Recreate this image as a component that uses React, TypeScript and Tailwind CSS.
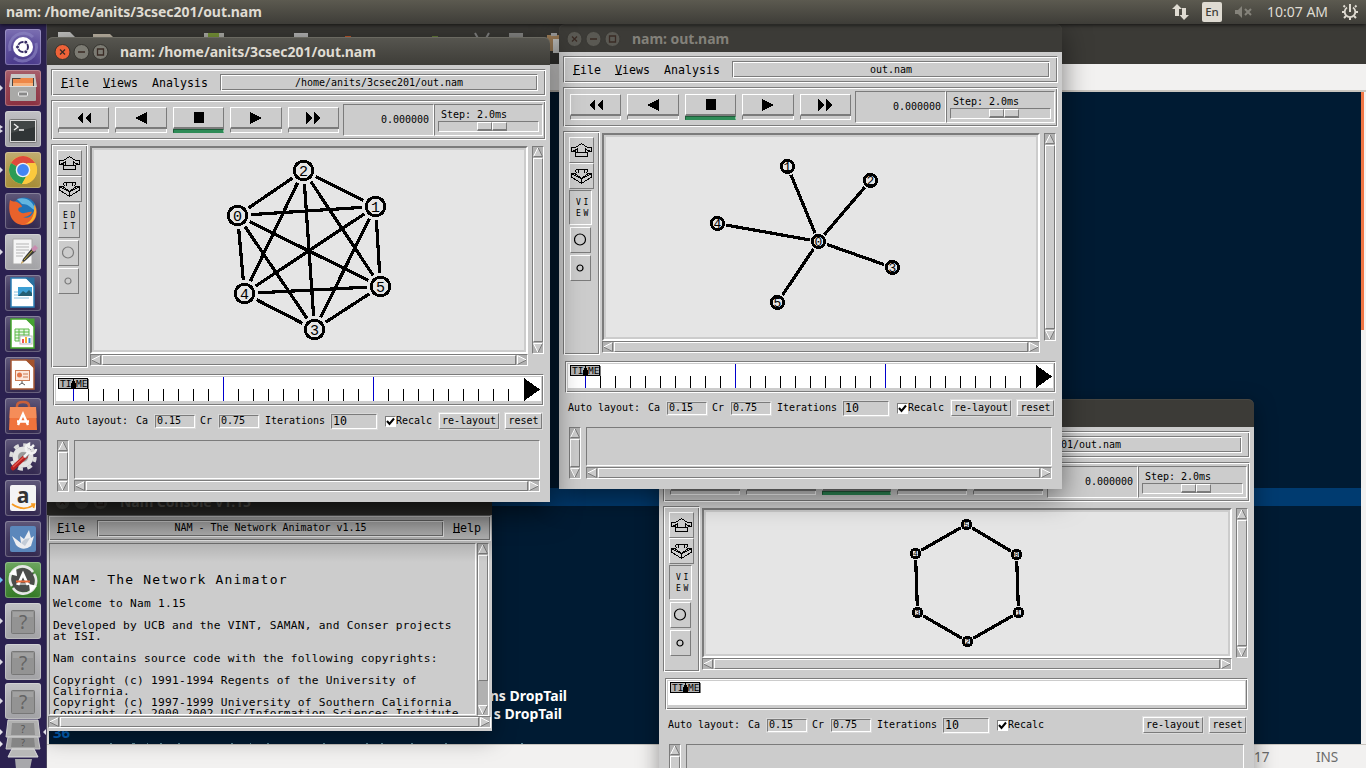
import React from "react";

const GROOVE =
  "border border-t-[#7b7b7b] border-l-[#7b7b7b] border-b-white border-r-white shadow-[inset_1px_1px_0_#fff,inset_-1px_-1px_0_#7b7b7b]";
const SUNKEN = "border border-t-[#7b7b7b] border-l-[#7b7b7b] border-b-white border-r-white";
const RAISED = "border border-t-white border-l-white border-b-[#7b7b7b] border-r-[#7b7b7b]";
const MONO6 = "font-['DejaVu_Sans_Mono',monospace] text-[10px] leading-[12px] tracking-[-0.02px] whitespace-pre";
const MONO7 = "font-['DejaVu_Sans_Mono',monospace] text-[11.6px] leading-[14px] tracking-[0.02px] whitespace-pre";
const UI = "font-['Noto_Sans','Open_Sans',sans-serif] whitespace-pre";

type Pt = [number, number];

function Arrow({ dir }: { dir: "up" | "down" | "left" | "right" }) {
  return (
    <svg width="10" height="10" viewBox="0 0 10 10" className="block shrink-0" fill="none">
      {dir === "up" && (
        <>
          <path d="M5 .5L9.5 9.5H.5Z" fill="#ccc" />
          <path d="M.5 9.5L5 .5" stroke="#fff" />
          <path d="M5 .5L9.5 9.5H.5" stroke="#7b7b7b" />
        </>
      )}
      {dir === "down" && (
        <>
          <path d="M.5.5H9.5L5 9.5Z" fill="#ccc" />
          <path d="M9.5.5H.5L5 9.5" stroke="#fff" />
          <path d="M5 9.5L9.5.5" stroke="#7b7b7b" />
        </>
      )}
      {dir === "left" && (
        <>
          <path d="M.5 5L9.5.5V9.5Z" fill="#ccc" />
          <path d="M.5 5L9.5.5" stroke="#fff" />
          <path d="M9.5.5V9.5L.5 5" stroke="#7b7b7b" />
        </>
      )}
      {dir === "right" && (
        <>
          <path d="M.5.5L9.5 5L.5 9.5Z" fill="#ccc" />
          <path d="M.5 9.5V.5L9.5 5" stroke="#fff" />
          <path d="M9.5 5L.5 9.5" stroke="#7b7b7b" />
        </>
      )}
    </svg>
  );
}

function VScroll({ tail = false }: { tail?: boolean }) {
  return (
    <div className={`flex w-3 shrink-0 flex-col gap-px bg-[#b1b1b1] ${SUNKEN}`}>
      <Arrow dir="up" />
      <div className={`min-h-0 flex-1 bg-[#ccc] ${RAISED}`} />
      {tail && <div className="h-[22px] shrink-0" />}
      <Arrow dir="down" />
    </div>
  );
}

function HScroll() {
  return (
    <div className={`flex h-3 shrink-0 gap-px bg-[#b1b1b1] ${SUNKEN}`}>
      <Arrow dir="left" />
      <div className={`min-w-0 flex-1 bg-[#ccc] ${RAISED}`} />
      <Arrow dir="right" />
    </div>
  );
}

function Menu({ children }: { children: string }) {
  return (
    <span className={`block ${MONO7}`}>
      <span className="underline decoration-1 underline-offset-[0px]">{children[0]}</span>
      {children.slice(1)}
    </span>
  );
}

function PlayButton({ icon, on = false }: { icon: string; on?: boolean }) {
  return (
    <div className="h-[26px] min-w-0 flex-1">
      <div className="flex h-[22px] justify-center border border-b-2 border-t-white border-l-white border-b-[#7b7b7b] border-r-[#7b7b7b] pt-1">
        <svg width="16" height="12" viewBox="0 0 16 12" className="block" shapeRendering="crispEdges">
          <path d={icon} />
        </svg>
      </div>
      <div
        className={
          on
            ? "h-1 border border-t-[#1f5c3a] border-l-[#1f5c3a] border-b-[#2e8b57] border-r-[#8fc4a4] bg-[#2e8b57]"
            : "h-1 border border-t-0 border-l-[#7b7b7b] border-b-white border-r-white bg-[#ccc]"
        }
      />
    </div>
  );
}

const PLAY_ICONS = [
  "M7 0V12L1 6ZM15 0V12L9 6Z",
  "M14 0V12L2 6Z",
  "M3 0H13V11H3Z",
  "M2 0L14 6L2 12Z",
  "M1 0L7 6L1 12ZM9 0L15 6L9 12Z",
];

function Toolbox({ edit }: { edit: boolean }) {
  const ink = edit ? "#7b7b7b" : "#000";
  return (
    <div className={`flex w-[37px] shrink-0 flex-col pt-[5px] pl-[5px] ${GROOVE}`}>
      <div className={`flex h-[26px] w-[25px] items-center justify-center ${RAISED}`}>
        <svg width="22" height="14" viewBox="0 0 22 14" fill="none" stroke="#000" shapeRendering="crispEdges">
          <path d="M10.5.5L4.500 4.500H.5V8.500H4.500M10.500.5L16.500 4.500H20.500V8.500H16.500M.5 8.500L6 6.500M20.500 8.500L15 6.500M6.500 5V9M14.500 5V9M4.500 9.500H16.500V13.500H4.500Z" />
        </svg>
      </div>
      <div className={`flex h-[26px] w-[25px] items-center justify-center ${RAISED}`}>
        <svg width="22" height="15" viewBox="0 0 22 15" fill="none" stroke="#000" shapeRendering="crispEdges">
          <path d="M4.500.5H16.500V2.500L14.500 4.500M4.500.5V2.500L6.500 4.500M.5 4.500H4L10.500 9.500L17 4.500H20.500V8L10.500 14.500L.5 8V4.500M.5 4.500L10.500 10L20.500 4.500M10.500 10V14M7 1L8 3L6.500 4.500M14 1L13 3L14.500 4.500" />
        </svg>
      </div>
      <div
        className={`mt-px flex h-[35px] flex-col items-center justify-center font-['DejaVu_Sans_Mono',monospace] text-[8px] leading-[11px] tracking-[2.6px] ${
          edit ? `ml-[1px] w-[22px] pl-[3px] ${RAISED}` : `w-[23px] pl-[6px] ${SUNKEN}`
        }`}
      >
        <span>{edit ? "ED" : "VI"}</span>
        <span>{edit ? "IT" : "EW"}</span>
      </div>
      <div className={`mt-[2px] ml-[1px] flex h-[26px] w-[21px] items-center justify-center pb-[2px] ${RAISED}`}>
        <svg width="13" height="13" viewBox="0 0 13 13" fill="none" stroke={ink}>
          <circle cx="6" cy="6.500" r="5.500" strokeWidth="1.200" />
        </svg>
      </div>
      <div className={`mt-[2px] ml-[1px] flex h-[26px] w-[21px] items-center justify-center pr-px ${RAISED}`}>
        <svg width="8" height="8" viewBox="0 0 8 8" fill="none" stroke={ink}>
          <circle cx="4" cy="4" r="3" strokeWidth="1.200" />
        </svg>
      </div>
    </div>
  );
}

function Network({
  box,
  nodes,
  edges,
  r,
  gap,
  font,
}: {
  box: [number, number, number, number];
  nodes: Pt[];
  edges: Pt[];
  r: number;
  gap: number;
  font: number;
}) {
  return (
    <svg width={box[2]} height={box[3]} viewBox={box.join(" ")} className="block bg-[#e5e5e5]">
      {edges.map(([a, b]) => {
        const [x1, y1] = nodes[a];
        const [x2, y2] = nodes[b];
        const len = Math.hypot(x2 - x1, y2 - y1);
        const dx = ((x2 - x1) / len) * gap;
        const dy = ((y2 - y1) / len) * gap;
        return (
          <line
            key={`${a}-${b}`}
            x1={x1 + dx}
            y1={y1 + dy}
            x2={x2 - dx}
            y2={y2 - dy}
            stroke="#000"
            strokeWidth="3.2"
            shapeRendering="crispEdges"
          />
        );
      })}
      {nodes.map(([x, y], i) => (
        <g key={i}>
          <circle cx={x} cy={y} r={r} fill="none" stroke="#000" strokeWidth="3" shapeRendering="crispEdges" />
          <text
            x={x}
            y={y + font * 0.34}
            fontSize={font}
            textAnchor="middle"
            fontFamily="Liberation Mono, DejaVu Sans Mono, monospace"
          >
            {i}
          </text>
        </g>
      ))}
    </svg>
  );
}

function Timeline({ ticks }: { ticks: boolean }) {
  return (
    <div className={`mx-[2px] mt-1.5 h-8 shrink-0 p-[2px] ${GROOVE}`}>
      <svg width="100%" height="24" className="block bg-white" shapeRendering="crispEdges">
        {ticks &&
          Array.from({ length: 30 }, (_, i) => (
            <rect
              key={i}
              x={16 + i * 15}
              y={i === 10 || i === 20 ? 0 : 12}
              width="1"
              height={i === 10 || i === 20 ? 24 : 12}
              transform="translate(1 0)"
              fill={i % 10 === 0 ? "#0000cd" : "#000"}
            />
          ))}
        {ticks && <path d="M468 1L484 12.500L468 24Z" />}
        <g transform="translate(1 1)">
          <rect x="1.500" y=".5" width="29" height="10" fill="#b1b1b1" stroke="#000" />
          <rect x="31" y="1" width="1" height="10" fill="#7b7b7b" />
          <text x="3" y="9" fontSize="9.500" fontFamily="DejaVu Sans Mono, monospace">
            TI
          </text>
          <text x="19" y="9" fontSize="9.500" fontFamily="DejaVu Sans Mono, monospace">
            ME
          </text>
          <path d="M16 0H17V3H18V5H19V10H14V5H15V3H16Z" />
        </g>
      </svg>
    </div>
  );
}

function Field({ value, big = false }: { value: string; big?: boolean }) {
  return (
    <span
      className={`flex items-center pl-[1px] shadow-[0_0_0_1px_#d9d9d9] ${SUNKEN} ${
        big ? `h-[15px] w-[46px] ${MONO7}` : `h-[13px] w-10 ${MONO6}`
      }`}
    >
      {value}
    </span>
  );
}

function Titlebar({ title, active }: { title: string; active: boolean }) {
  const ring = active ? "#35342f" : "#3a3935";
  return (
    <div
      className={`flex h-7 shrink-0 items-center rounded-t-[6px] pl-[7px] ${
        active
          ? "bg-linear-to-b from-[#575650] to-[#3e3d38] shadow-[inset_0_1px_0_#6a6961]"
          : "bg-[#3c3b37] shadow-[inset_0_1px_0_#474641]"
      }`}
    >
      <svg width="56" height="18" viewBox="0 0 56 18" className="mt-px block shrink-0" fill="none">
        <circle cx="8.500" cy="9" r="7.500" fill={active ? "#ee6238" : "#5a5953"} stroke={ring} />
        <circle cx="27.500" cy="9" r="7.500" fill={active ? "#7c7b73" : "#5a5953"} stroke={ring} />
        <circle cx="46.500" cy="9" r="7.500" fill={active ? "#7c7b73" : "#5a5953"} stroke={ring} />
        <path d="M6 6.500L11 11.500M11 6.500L6 11.500M24 9H31M43.500 6H49.500V12H43.500Z" stroke="#3a2b25" strokeWidth="1.300" />
      </svg>
      <span
        className={`mt-[2px] pl-[10px] text-[14px] leading-7 font-bold tracking-[-0.05px] ${UI} ${
          active ? "text-[#dfdbd2]" : "text-[#83817a]"
        }`}
      >
        {title}
      </span>
    </div>
  );
}

interface NamProps {
  frame: string;
  title: string;
  file: string;
  active?: boolean;
  edit?: boolean;
  ticks?: boolean;
  midHeight: string;
  children: React.ReactNode;
}

function NamWindow({ frame, title, file, active = false, edit = false, ticks = true, midHeight, children }: NamProps) {
  return (
    <section className={`absolute flex flex-col rounded-t-[6px] text-black ${frame}`}>
      <Titlebar title={title} active={active} />
      <div className="flex min-h-0 flex-1 flex-col bg-[#ccc] px-1 pt-1 pb-2.5">
        <div className={`flex h-[27px] shrink-0 items-center pr-[7px] pl-[9px] ${GROOVE}`}>
          <div className="flex w-[159px] shrink-0 gap-[14px]">
            <Menu>File</Menu>
            <Menu>Views</Menu>
            <Menu>Analysis</Menu>
          </div>
          <div className={`flex h-[17px] flex-1 items-center justify-center ${GROOVE} ${MONO6}`}>{file}</div>
        </div>

        <div className={`mt-1 flex h-10 shrink-0 pt-[3px] pr-[2px] pl-1.5 ${GROOVE}`}>
          <div className="mt-[3px] flex flex-1 gap-1.5">
            {PLAY_ICONS.map((d, i) => (
              <PlayButton key={i} icon={d} on={i === 2} />
            ))}
          </div>
          <div className={`ml-1 flex h-8 w-[91px] items-center justify-end pr-1 ${SUNKEN} ${MONO6}`}>0.000000</div>
          <div className={`h-8 w-[109px] px-[3px] pt-[4px] ${SUNKEN}`}>
            <div className={`pl-[3px] ${MONO6}`}>Step: 2.0ms</div>
            <div className={`h-[11px] w-[101px] pl-[38px] ${SUNKEN}`}>
              <div className="flex h-[9px] w-[30px]">
                <div className="w-[15px] border border-b-2 border-t-white border-l-white border-b-[#7b7b7b] border-r-[#7b7b7b]" />
                <div className="w-[15px] border border-b-2 border-t-white border-l-white border-b-[#7b7b7b] border-r-[#7b7b7b]" />
              </div>
            </div>
          </div>
        </div>

        <div className={`mt-1 flex shrink-0 ${midHeight}`}>
          <Toolbox edit={edit} />
          <div className="mt-[2px] mb-[2px] ml-[2px] flex flex-1 flex-col">
            <div className="min-h-0 flex-1 border-2 border-t-[#7b7b7b] border-l-[#7b7b7b] border-b-white border-r-white p-[2px]">
              {children}
            </div>
            <HScroll />
          </div>
          <div className="mt-[2px] mr-[2px] mb-[14px] ml-1 flex">
            <VScroll />
          </div>
        </div>

        <Timeline ticks={ticks} />

        <div className={`flex h-[34px] shrink-0 items-center pb-1 pl-[5px] ${MONO6}`}>
          <span className="w-[80px]">Auto layout:</span>
          <span className="w-[19px]">Ca</span>
          <Field value="0.15" />
          <span className="w-6 pl-[5px]">Cr</span>
          <Field value="0.75" />
          <span className="w-[72px] pl-[6px]">Iterations</span>
          <Field value="10" big />
          <span className="ml-2 flex h-[11px] w-[11px] items-center justify-center border border-t-[#7b7b7b] border-l-[#7b7b7b] border-white bg-white">
            <svg width="9" height="9" viewBox="0 0 9 9" fill="none">
              <path d="M1 4L3.500 7L8 1.500" stroke="#000" strokeWidth="2" />
            </svg>
          </span>
          <span>Recalc</span>
          <span className="flex-1" />
          <span className={`flex h-4 w-[60px] items-center justify-center shadow-[0_0_0_1px_#dcdcdc] ${RAISED}`}>
            re-layout
          </span>
          <span className={`mr-1 ml-1.5 flex h-4 w-[37px] items-center justify-center shadow-[0_0_0_1px_#dcdcdc] ${RAISED}`}>
            reset
          </span>
        </div>

        <div className="flex min-h-0 flex-1 pr-1.5 pl-1.5">
          <VScroll />
          <div className="ml-[5px] flex flex-1 flex-col">
            <div className={`mb-px min-h-0 flex-1 ${SUNKEN}`} />
            <HScroll />
          </div>
        </div>
      </div>
    </section>
  );
}

function Console() {
  return (
    <section className="absolute top-[487px] left-[47px] z-10 flex h-[244px] w-[445px] flex-col shadow-[0_6px_22px_rgba(0,0,0,0.4)]">
      <Titlebar title="Nam Console v1.15" active={false} />
      <div className="flex min-h-0 flex-1 flex-col bg-[#ccc] px-px pb-[2px]">
        <div className={`flex h-[26px] shrink-0 items-center pr-[9px] pl-2 ${GROOVE}`}>
          <span className="w-[40px]">
            <Menu>File</Menu>
          </span>
          <div className={`flex h-[17px] flex-1 items-center justify-center ${GROOVE} ${MONO6}`}>
            NAM - The Network Animator v1.15
          </div>
          <span className="pl-[9px]">
            <Menu>Help</Menu>
          </span>
        </div>
        <div className="mt-[2px] flex h-[173px] shrink-0 px-px">
          <div
            className={`h-[172px] w-[427px] overflow-hidden pt-[28px] pl-[3px] font-['DejaVu_Sans_Mono',monospace] text-[11.2px] leading-[11px] tracking-[0.258px] whitespace-pre ${SUNKEN}`}
          >
            <div className="text-[13px] leading-[16px] tracking-[1.2px]">NAM - The Network Animator</div>
            <div className="pt-[10px]">Welcome to Nam 1.15</div>
            <div className="pt-[11px]">{"Developed by UCB and the VINT, SAMAN, and Conser projects\nat ISI."}</div>
            <div className="pt-[11px]">Nam contains source code with the following copyrights:</div>
            <div className="pt-[11px]">
              {
                "Copyright (c) 1991-1994 Regents of the University of\nCalifornia.\nCopyright (c) 1997-1999 University of Southern California\nCopyright (c) 2000-2002 USC/Information Sciences Institute"
              }
            </div>
          </div>
          <div className="ml-px flex">
            <VScroll tail />
          </div>
        </div>
        <HScroll />
      </div>
      <div className="absolute top-[15px] left-0 h-[60px] w-full bg-linear-to-b from-black/40 to-black/0" />
    </section>
  );
}

/* ---------- launcher ---------- */

function Tile({
  tone,
  marks = 0,
  blue = false,
  children,
}: {
  tone: string;
  marks?: number;
  blue?: boolean;
  children: React.ReactNode;
}) {
  return (
    <div className="flex h-[41px] w-[47px] shrink-0 items-center last-of-type:-mt-[2px]">
      <svg width="5" height="12" viewBox="0 0 5 12" fill={blue ? "#6fc3f0" : "#dcdae4"}>
        {marks === 1 && <path d="M0 3L3 6L0 9Z" />}
        {marks === 2 && <path d="M0 2L3 4L0 6ZM0 6L3 8L0 10Z" />}
      </svg>
      <div
        className={`h-9 w-9 rounded-[3px] bg-linear-to-b shadow-[inset_0_0_0_1px_rgba(255,255,255,0.25),inset_0_8px_10px_rgba(255,255,255,0.12)] ${tone}`}
      >
        <svg width="36" height="36" viewBox="0 0 36 36" fill="none" className="block">
          {children}
        </svg>
      </div>
    </div>
  );
}

const DARK = "from-[#4a4268] to-[#33294f]";
const LIGHT = "from-[#b9b9bd] to-[#a2a2a5]";

function Doc({ color, dark, children }: { color: string; dark: string; children: React.ReactNode }) {
  return (
    <>
      <path d="M6 3H22L29 10V32H6Z" fill="#fff" stroke={color} strokeWidth="1.500" />
      <path d="M20 2.500H29.500V12Z" fill={dark} />
      {children}
    </>
  );
}

function Unknown() {
  return (
    <>
      <rect x="6.500" y="7.500" width="23" height="23" rx="1" fill="#939393" stroke="#777" />
      <rect x="8" y="9" width="20" height="5" fill="#aaa" opacity=".6" />
      <text x="18" y="26" fontSize="19" textAnchor="middle" fill="#646464" fontFamily="Noto Sans, sans-serif">
        ?
      </text>
    </>
  );
}

function Launcher() {
  return (
    <nav className="relative z-40 flex w-[47px] shrink-0 flex-col overflow-hidden border-r border-[#4c4660] bg-[#2b2150] pt-[2px]">
      <Tile tone="from-[#6a5ca8] to-[#4b3b8c]">
        <path d="M5 22A14 14 0 0 1 28 8M31 14A14 14 0 0 1 9 29" stroke="#9088c4" strokeWidth="3" opacity=".6" />
        <circle cx="18" cy="18" r="10" fill="#fff" />
        <circle cx="18" cy="18" r="5" stroke="#372d66" strokeWidth="2" />
        <circle cx="12.500" cy="18" r="2" fill="#372d66" stroke="#fff" />
        <circle cx="20.800" cy="13.200" r="2" fill="#372d66" stroke="#fff" />
        <circle cx="20.800" cy="22.800" r="2" fill="#372d66" stroke="#fff" />
      </Tile>
      <Tile tone="from-[#9c4a58] to-[#8a3141]" marks={1}>
        <path d="M6 4H30L32 17H4Z" fill="#c9c9c7" />
        <path d="M7 8H29V17H7Z" fill="#4a443f" />
        <path d="M8 9H15L16 8H28V17H8Z" fill="#ee8748" />
        <path d="M8 13H28V17H8Z" fill="#f7b27d" />
        <rect x="5" y="16" width="26" height="15" rx="1" fill="#a9a9a7" />
        <path d="M5 16.500H31" stroke="#ddd" />
        <rect x="13.500" y="22" width="9" height="4" rx="1" fill="#888" stroke="#eee" />
      </Tile>
      <Tile tone={LIGHT} marks={2}>
        <rect x="4.500" y="8.500" width="27" height="23" rx="1" fill="#ddd" stroke="#777" />
        <rect x="6" y="10" width="24" height="20" fill="#303536" />
        <path d="M6 10H30V16L6 22Z" fill="#4c5152" opacity=".6" />
        <path d="M9 13L13 16L9 19M14 19H19" stroke="#eee" strokeWidth="1.400" />
      </Tile>
      <Tile tone="from-[#b9a25e] to-[#a68d36]" marks={1}>
        <circle cx="18" cy="18" r="14" fill="#fbc93d" />
        <path d="M18 18L5.900 11A14 14 0 0 1 30.100 11Z" fill="#de4a3c" />
        <path d="M5.900 11A14 14 0 0 0 17 32L23 21L18 18Z" fill="#2a9c56" />
        <path d="M30.100 11A14 14 0 0 1 17 32L24 20L22 11Z" fill="#fbc93d" />
        <circle cx="18" cy="18" r="6.600" fill="#4285f4" stroke="#f1f1f1" strokeWidth="1.400" />
      </Tile>
      <Tile tone={DARK}>
        <circle cx="19" cy="17" r="12.500" fill="#2174b8" />
        <path d="M12 6C20 3 29 8 30 17C26 16 25 11 17 11Z" fill="#62b5e0" />
        <path d="M5 7C7 9 10 8 12 9C14 10 17 12 17 14C13 14 12 17 15 19C19 22 23 18 27 19C25 23 21 24 18 24C25 27 30 20 30 12C34 20 31 32 19 32C8 32 2 22 5 7Z" fill="#e9622b" />
        <path d="M29 11C34 20 30 31 20 31C28 28 30 20 29 11Z" fill="#f8b332" />
      </Tile>
      <Tile tone={LIGHT} marks={1}>
        <path d="M8 5H27V30H8Z" fill="#f6f6f6" stroke="#aaa" />
        <path d="M11 10H24M11 13H24M11 16H24M11 19H20M11 22H18" stroke="#b5b5b5" />
        <path d="M16 30L18 25L27 14L31 17L20 27Z" fill="#3b3b3b" />
        <path d="M19 26L28 16" stroke="#c9b43a" />
        <path d="M26 15L30 11L33 14L29 18Z" fill="#c98bb0" />
        <path d="M16 30L17 27L19 28Z" fill="#e8c070" />
      </Tile>
      <Tile tone={DARK}>
        <Doc color="#2a7eb5" dark="#2a6f9f">
          <rect x="13" y="12" width="14" height="9" fill="#3c9fd4" />
          <path d="M13 21L18 16L21 18L24 15L27 18V21Z" fill="#235f73" />
          <path d="M9 17H13M9 20H13M9 23H24" stroke="#8ac0dd" />
        </Doc>
      </Tile>
      <Tile tone={DARK}>
        <Doc color="#43a82a" dark="#45a332">
          <path d="M10 13H24V25H10ZM10 16H24M10 19H24M10 22H24M14 13V25M19 13V25" stroke="#5ab947" fill="#e8f8e4" />
          <rect x="15" y="20" width="12" height="8" fill="#fff" stroke="#bbb" />
          <path d="M18 27V23" stroke="#e55" strokeWidth="2" />
          <path d="M21 27V21" stroke="#f5b030" strokeWidth="2" />
          <path d="M24.500 27V22" stroke="#3b8ed0" strokeWidth="2" />
        </Doc>
      </Tile>
      <Tile tone={DARK}>
        <Doc color="#a85a34" dark="#a4532c">
          <rect x="10.500" y="13.500" width="14" height="10" fill="#fbe6da" stroke="#cc7a52" />
          <circle cx="14.500" cy="18" r="2.500" fill="#e0764a" />
          <path d="M18 17H23M18 20H23" stroke="#cc7a52" />
          <path d="M17 24V26L14 28M17 26L20 28" stroke="#555" />
        </Doc>
      </Tile>
      <Tile tone={DARK}>
        <path d="M12 12V8Q12 4 18 4T24 8V12" stroke="#c9603a" strokeWidth="2.500" />
        <path d="M5 9H31L32 32H4Z" fill="#f0733c" />
        <path d="M5 9H31L31.500 20H4.500Z" fill="#f58d59" />
        <path d="M13 27L18 16L23 27M12 23.500H24" stroke="#fff" strokeWidth="2.400" />
      </Tile>
      <Tile tone={DARK}>
        <circle cx="18" cy="18" r="8" fill="#d4d4d4" stroke="#e2e2e2" strokeWidth="5" />
        <circle cx="18" cy="18" r="12" stroke="#dcdcdc" strokeWidth="3.500" strokeDasharray="5 4.400" />
        <circle cx="18" cy="18" r="5" fill="#9a9a9a" />
        <path d="M8 29L21 17" stroke="#b81f1f" strokeWidth="4.500" strokeLinecap="round" />
        <path d="M8 28L20 17" stroke="#e45b50" strokeWidth="1.300" />
        <path d="M19 18L24 13" stroke="#8a8a8a" strokeWidth="4.500" />
        <path d="M19 18L25 12M29 6L26 9L24 8L24 5A5 5 0 1 0 31 10" stroke="#f2f2f2" strokeWidth="2.500" />
      </Tile>
      <Tile tone={DARK}>
        <rect x="5" y="5" width="26" height="26" rx="2" fill="#f4f4f4" />
        <text x="18" y="23" fontSize="21" fontWeight="700" textAnchor="middle" fill="#333" fontFamily="Open Sans, sans-serif">
          a
        </text>
        <path d="M7 24Q18 32 29 25M26 24H29.500L28.500 28" stroke="#f79a20" strokeWidth="1.700" />
      </Tile>
      <Tile tone={DARK}>
        <rect x="5" y="5" width="26" height="26" rx="2" fill="#5b87bb" />
        <path d="M7 15L16 22L15 15L19 18L24 9L26 17L29 15L26 25Q18 31 11 24Z" fill="#ecedf0" />
        <path d="M16 22L20 18L25 17L20 25Z" fill="#c3ccd7" />
      </Tile>
      <Tile tone="from-[#5a9b4b] to-[#347a26]" marks={1} blue>
        <circle cx="18" cy="18" r="12" fill="#4b4d4b" />
        <path d="M7 24A12.500 12.500 0 0 1 28 10M29 12A12.500 12.500 0 0 1 8 26" stroke="#e6e6e6" strokeWidth="2.600" />
        <path d="M4 12L11 6L12 14ZM32 24L25 30L24 22Z" fill="#fff" />
        <path d="M13 23L18 12L23 23" stroke="#fff" strokeWidth="2.800" />
        <path d="M11 19.500H25" stroke="#e86a3a" strokeWidth="2" />
        <path d="M11 22H25" stroke="#fff" />
      </Tile>
      <Tile tone={LIGHT} marks={1}>
        <Unknown />
      </Tile>
      <Tile tone={LIGHT} marks={1}>
        <Unknown />
      </Tile>
      <Tile tone={LIGHT} marks={1}>
        <Unknown />
      </Tile>
      <svg width="47" height="51" viewBox="0 717 47 51" className="mt-[-3px] block shrink-0">
        <path d="M8 719H38L40 736H6Z" fill="#b0b0b0" stroke="#d0d0d0" />
        <path d="M12 722H34L35 734H11Z" fill="#8f8f8f" />
        <text x="23" y="732" fontSize="10" textAnchor="middle" fill="#555">?</text>
        <path d="M8 736H38L40 748H6Z" fill="#a5a5a5" stroke="#cdcdcd" />
        <path d="M12 737H34L35 746H11Z" fill="#858585" />
        <text x="23" y="745" fontSize="9" textAnchor="middle" fill="#555">?</text>
        <path d="M12 748H34L38 756H8Z" fill="#b8b8b8" stroke="#ddd" />
        <path d="M15 758H32L30 768H16Z" fill="#a8a8ac" />
        <path d="M0 728L3 731L0 734ZM0 740L3 743L0 746ZM46 728L43 731L46 734Z" fill="#e4e2ea" />
      </svg>
    </nav>
  );
}

function Panel() {
  return (
    <header className="relative z-50 flex h-6 shrink-0 items-center bg-linear-to-b from-[#5c5a50] to-[#3e3d38] pr-[7px] pl-1.5 shadow-[0_1px_4px_rgba(0,0,0,0.7)]">
      <span className={`text-[14px] leading-6 font-bold tracking-[-0.05px] text-[#dfdbd2] ${UI}`}>
        nam: /home/anits/3csec201/out.nam
      </span>
      <span className="flex-1" />
      <svg width="18" height="16" viewBox="0 0 18 16" fill="#dfdbd2">
        <path d="M5 0L10 5H7V12H3V5H0ZM12 16L7.500 11H10V4H14V11H17Z" />
      </svg>
      <span
        className={`ml-3 flex h-5 w-5 items-center justify-center rounded-[2px] bg-[#dfdbd2] text-[11.500px] font-medium text-[#3e3d38] ${UI}`}
      >
        En
      </span>
      <svg width="18" height="14" viewBox="0 0 18 14" className="ml-3">
        <path d="M1 5H4L8 1V13L4 9H1Z" fill="#85837b" />
        <path d="M11 4L17 10M17 4L11 10" stroke="#85837b" strokeWidth="2" />
      </svg>
      <span className={`ml-[15px] w-[61px] text-[14px] leading-6 text-[#dfdbd2] ${UI}`}>10:07 AM</span>
      <svg width="18" height="18" viewBox="0 0 18 18" className="ml-[13px]" fill="none" stroke="#dfdbd2">
        <path d="M6 4.500A5.300 5.300 0 1 0 12 4.500" strokeWidth="1.800" />
        <path d="M9 1V9" strokeWidth="2" />
        <path
          d="M4 4L2.500 2.500M14 4L15.500 2.500M3.500 9H1M14.500 9H17M5 13L3 15M13 13L15 15M9 14.500V17"
          strokeWidth="2"
        />
      </svg>
    </header>
  );
}

function Editor() {
  return (
    <main className="flex min-w-0 flex-1 flex-col bg-[#f2f1f0]">
      <div className="h-10 shrink-0 bg-[#3b3a36]">
        <svg width="540" height="40" viewBox="47 24 540 40" className="block">
          <path d="M58 32H70L75 37V50H58Z" fill="#c8c8c6" />
          <path d="M93 34H110L114 38H93Z" fill="#c9bfae" />
          <path d="M204 33H224V45H204Z" fill="#b3b3ae" />
          <path d="M208 33H219V45H208Z" fill="#7c9a3a" />
          <path d="M294 33H308V45H294Z" fill="#bbb" />
          <path d="M345 36H351V40H345Z" fill="#c65a2e" />
          <path d="M432 36H438V40H432Z" fill="#67803a" />
          <path d="M475 33L479 40M489 33L485 40" stroke="#888" strokeWidth="2" />
          <path d="M509 33H523V45H509Z" fill="#8a8a88" />
          <path d="M547 35H562V51H547Z" fill="#a9865d" />
          <path d="M553 39H562V53H553Z" fill="#d5d5d2" />
          <path d="M551 33H557V36H551Z" fill="#aaa" />
        </svg>
      </div>
      <div className="h-7 shrink-0 border-b-2 border-[#c9c5bf]" />
      <div className="flex h-[652px] shrink-0 pr-[2px] pl-[2px]">
        <div className="flex min-w-0 flex-1 flex-col overflow-hidden bg-[#001b33]">
          <div className="h-[396px] shrink-0" />
          <div className="h-[18px] shrink-0 bg-[#003b70]" />
          <div className="h-[181px] shrink-0" />
          <div className={`flex h-[36px] shrink-0 flex-col text-[14px] leading-[18px] font-bold text-white ${UI}`}>
            <span className="w-[518px] text-right">ns DropTail</span>
            <span className="w-[513px] text-right">s DropTail</span>
          </div>
          <div className={`h-[18px] pl-1 text-[15px] leading-[18px] font-bold text-[#0065bf] ${UI}`}>36</div>
          <svg width="500" height="1" viewBox="49 0 500 1" className="mt-[2px] block shrink-0" fill="#5b8a9a">
            <path d="M110 0h2v2h-2zM132 0h3v2h-3zM147 0h1v2h-1zM160 0h2v2h-2zM178 0h2v2h-2zM231 0h2v2h-2zM250 0h1v2h-1zM267 0h2v2h-2zM323 0h2v2h-2zM366 0h2v2h-2zM381 0h2v2h-2zM411 0h2v2h-2zM445 0h2v2h-2zM521 0h2v2h-2z" />
          </svg>
        </div>
        <div className="h-[238px] w-[3px] shrink-0 bg-[#f07746]" />
      </div>
      <div className={`flex flex-1 border-t border-[#c9c5bf] pl-[1207px] text-[13.500px] leading-[25px] text-[#6b6b6b] ${UI}`}>
        <span className="w-[62px]">17</span>
        <span>INS</span>
      </div>
    </main>
  );
}

const A_NODES: Pt[] = [
  [237.5, 215.5],
  [375.5, 206.5],
  [303.5, 170.5],
  [314.5, 329.5],
  [244.5, 293.5],
  [380.5, 286.5],
];
const A_EDGES: Pt[] = [
  [0, 1], [0, 2], [0, 3], [0, 4], [0, 5], [1, 2], [1, 3], [1, 4], [1, 5], [2, 3], [2, 4], [2, 5], [3, 4], [3, 5], [4, 5],
];
const B_NODES: Pt[] = [
  [818.5, 241.5],
  [787.5, 166.5],
  [870.5, 180.5],
  [892.5, 267.5],
  [717.5, 223.5],
  [777.5, 302.5],
];
const B_EDGES: Pt[] = [[0, 1], [0, 2], [0, 3], [0, 4], [0, 5]];
const C_NODES: Pt[] = [
  [1016.5, 554.5],
  [1018.5, 612.5],
  [967.5, 641.5],
  [917.5, 612.5],
  [915.5, 553.5],
  [966.5, 524.5],
];
const C_EDGES: Pt[] = [[0, 1], [1, 2], [2, 3], [3, 4], [4, 5], [5, 0]];

export default function App() {
  return (
    <div className="relative flex h-[768px] w-[1366px] flex-col overflow-hidden">
      <Panel />
      <div className="flex min-h-0 flex-1">
        <Launcher />
        <Editor />
      </div>

      <Console />

      <NamWindow
        frame="left-[659px] top-[399px] z-10 w-[595px] h-[407px] shadow-[0_6px_22px_rgba(0,0,0,0.4)]"
        title=""
        file="/home/anits/3csec201/out.nam"
        midHeight="h-[166px]"
        ticks={false}
      >
        <Network box={[706, 512, 522, 142]} nodes={C_NODES} edges={C_EDGES} r={4.3} gap={6.5} font={8} />
      </NamWindow>

      <NamWindow
        frame="left-[559px] top-[24px] z-20 w-[503px] h-[465px] shadow-[0_8px_28px_rgba(0,0,0,0.5)]"
        title="nam: out.nam"
        file="out.nam"
        midHeight="h-[224px]"
      >
        <Network box={[606, 137, 430, 200]} nodes={B_NODES} edges={B_EDGES} r={6.1} gap={9} font={13} />
      </NamWindow>

      <NamWindow
        frame="left-[47px] top-[37px] z-30 w-[503px] h-[465px] shadow-[0_8px_30px_rgba(0,0,0,0.65)]"
        title="nam: /home/anits/3csec201/out.nam"
        file="/home/anits/3csec201/out.nam"
        midHeight="h-[224px]"
        active
        edit
      >
        <Network box={[94, 150, 430, 200]} nodes={A_NODES} edges={A_EDGES} r={9.2} gap={13.5} font={15} />
      </NamWindow>
    </div>
  );
}
